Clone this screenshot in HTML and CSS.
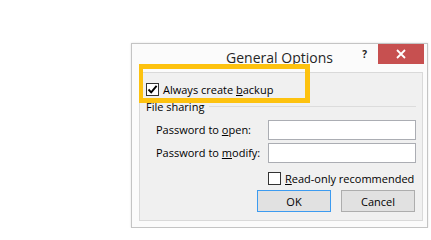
FILE: index.html
```html
<!DOCTYPE html>
<html lang="en">
<head>
<meta charset="utf-8">
<title>General Options</title>
<link rel="stylesheet" href="styles.css">
</head>
<body>
<div class="dialog">
  <div class="titlebar">
    <div class="spacer"></div>
    <div class="title">General Options</div>
    <div class="controls">
      <span class="help">?</span>
      <span class="close">
        <svg width="10" height="10" viewBox="0 0 10 10"><path d="M1 1 L9 9 M9 1 L1 9" stroke="#fff" stroke-width="1.8" fill="none"/></svg>
      </span>
    </div>
  </div>
  <div class="panel">
    <div class="check-row first">
      <span class="box">
        <svg width="11" height="11" viewBox="0 0 11 11"><path d="M1.5 5.5 L4.2 8.3 L9.6 1.8" stroke="#000" stroke-width="1.9" fill="none"/></svg>
      </span>
      <span class="label">Always create <u>b</u>ackup</span>
    </div>
    <div class="group">
      <span class="label">File sharing</span>
      <span class="rule"></span>
    </div>
    <div class="field first-field">
      <span class="label">Password to <u>o</u>pen:</span>
      <span class="input"></span>
    </div>
    <div class="field">
      <span class="label">Password to <u>m</u>odify:</span>
      <span class="input"></span>
    </div>
    <div class="check-row readonly">
      <span class="box"></span>
      <span class="label"><u>R</u>ead-only recommended</span>
    </div>
    <div class="buttons">
      <span class="btn default">OK</span>
      <span class="btn">Cancel</span>
    </div>
  </div>
  <div class="highlight"></div>
</div>
</body>
</html>
```
FILE: styles.css
```css
html, body {
  margin: 0;
  padding: 0;
  background: #ffffff;
}

body {
  font-family: "Open Sans", "Noto Sans", sans-serif;
  color: #000;
}

.dialog {
  position: relative;
  box-sizing: border-box;
  width: 297px;
  margin: 43px 0 0 131px;
  padding-bottom: 6px;
  background: #fbfbfb;
  border: 1px solid #c4c4c4;
  box-shadow: 0 0 2px rgba(0, 0, 0, 0.12);
}

.titlebar {
  display: grid;
  grid-template-columns: 1fr auto 1fr;
  height: 28px;
}

.title {
  font-size: 14px;
  line-height: 28px;
  color: #262626;
  white-space: nowrap;
}

.controls {
  justify-self: end;
  display: flex;
  align-items: flex-start;
  margin-right: 3px;
}

.help {
  font-size: 10px;
  font-weight: bold;
  line-height: 14px;
  margin-top: 3px;
  margin-right: 11px;
  color: #222;
}

.close {
  width: 46px;
  height: 20px;
  background: #c75050;
  display: flex;
  align-items: center;
  justify-content: center;
}

.close svg {
  display: block;
}

.panel {
  margin: 0 4px 0 7px;
  background: #f0f0f0;
  border: 1px solid #d9d9d9;
  padding: 10px 0 8px 0;
  font-size: 11px;
}

.label {
  line-height: 13px;
  white-space: nowrap;
}

.check-row {
  display: flex;
  align-items: center;
  height: 13px;
}

.check-row.first {
  padding-left: 6px;
}

.box {
  box-sizing: border-box;
  width: 13px;
  height: 13px;
  border: 1px solid #333;
  background: #fff;
  margin-right: 4px;
  display: flex;
  align-items: center;
  justify-content: center;
  flex: none;
}

.box svg {
  display: block;
}

.group {
  display: flex;
  align-items: center;
  height: 13px;
  margin-top: 4px;
  padding-left: 6px;
  padding-right: 6px;
}

.rule {
  flex: 1;
  height: 1px;
  background: #dcdcdc;
  margin-left: 5px;
}

.field {
  display: flex;
  align-items: center;
  height: 20px;
  padding-left: 16px;
  padding-right: 6px;
  margin-top: 3px;
}

.field.first-field {
  margin-top: 7px;
}

.field .label {
  flex: 1;
  line-height: 20px;
}

.input {
  box-sizing: border-box;
  width: 148px;
  height: 20px;
  background: #fff;
  border: 1px solid #abadb3;
}

.check-row.readonly {
  margin-top: 9px;
  padding-left: 128px;
}

.buttons {
  display: flex;
  justify-content: flex-end;
  gap: 10px;
  margin-top: 5px;
  padding-right: 7px;
}

.btn {
  box-sizing: border-box;
  width: 74px;
  height: 22px;
  background: #e1e1e1;
  border: 1px solid #adadad;
  display: flex;
  align-items: center;
  justify-content: center;
  line-height: 13px;
}

.btn.default {
  border-color: #3c9bf0;
}

.highlight {
  position: absolute;
  left: 7px;
  top: 20px;
  width: 171px;
  height: 39px;
  box-sizing: border-box;
  border-style: solid;
  border-color: #fdc20f;
  border-width: 5px 5px 5px 4px;
}
```
